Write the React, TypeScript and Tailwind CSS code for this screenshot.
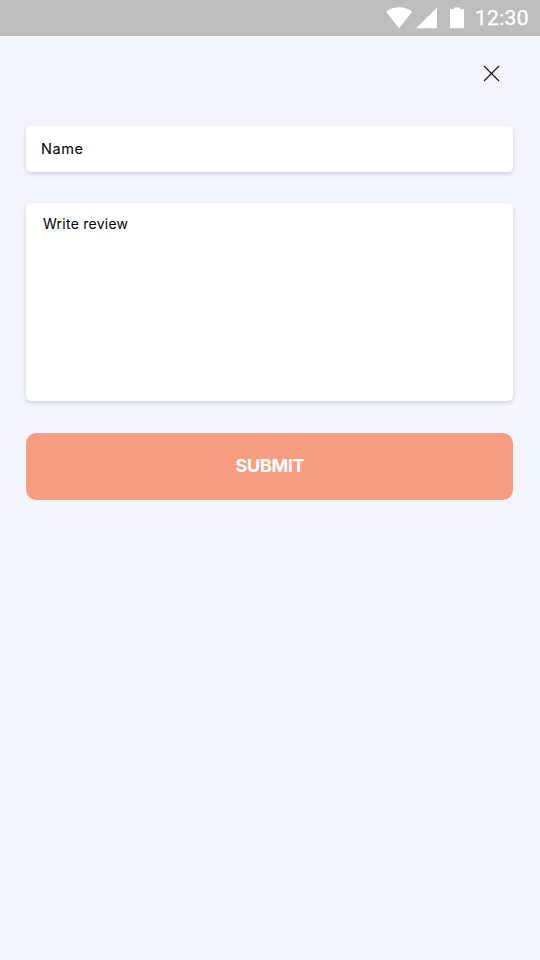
function StatusBar() {
  return (
    <header className="flex h-9 shrink-0 items-center justify-end bg-[#bdbdbd] pr-3 text-white">
      <svg className="h-9 w-[90px]" viewBox="0 0 90 36" fill="currentColor">
        <path d="M13 28.2 0 11.8C3.500 8.800 8 7.300 13 7.300s9.600 1.500 13.200 4.500Z" />
        <path d="M51 7.800V28.300H30Z" />
        <path d="M64 9.200h4V7.500h6v1.700h4v19.100H64Z" />
      </svg>
      <span className="w-[52px] whitespace-nowrap font-['Roboto',sans-serif] text-[21px] leading-9 -indent-px tracking-[0.3px] [-webkit-text-stroke:0.25px_white]">
        12:30
      </span>
    </header>
  );
}

export default function App() {
  return (
    <div className="flex min-h-[960px] w-[540px] flex-col bg-[#f2f5fc] font-['Inter',sans-serif] text-black">
      <StatusBar />
      <main className="flex flex-col px-[26px] pt-[29px] pr-[27px]">
        <div className="flex justify-end pr-[13px]">
          <button type="button" aria-label="Close" className="h-[17px] w-[17px]">
            <svg className="h-[17px] w-[17px]" viewBox="0 0 17 17" fill="none" stroke="#111" strokeWidth="1.1">
              <path d="M1 1 16 16M16 1 1 16" />
            </svg>
          </button>
        </div>
        <form className="mt-11 flex flex-col">
          <div className="flex h-[46px] items-center rounded-[5px] bg-white px-[15px] shadow-[0_2px_4px_rgba(0,0,0,0.14)]">
            <span className="text-[14.5px] tracking-[0.6px]">Name</span>
          </div>
          <div className="mt-[31px] h-[198px] rounded-[5px] bg-white px-[17px] pt-[11px] shadow-[0_2px_4px_rgba(0,0,0,0.14)]">
            <span className="block text-sm leading-5 tracking-[0.25px]">Write review</span>
          </div>
          <button
            type="button"
            className="mt-8 h-[67px] rounded-[10px] bg-[#f99d82] pb-[2px] pl-[1px] text-lg font-bold tracking-[-0.3px] text-white"
          >
            SUBMIT
          </button>
        </form>
      </main>
    </div>
  );
}
